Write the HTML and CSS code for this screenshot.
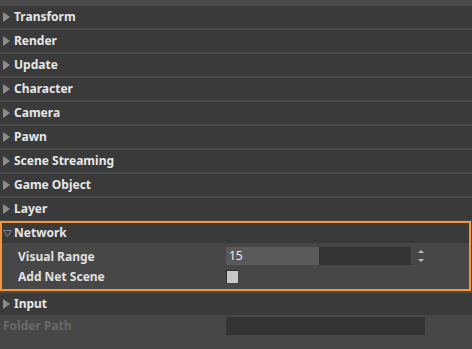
FILE: index.html
```html
<!DOCTYPE html>
<html>
<head>
<meta charset="utf-8">
<link rel="stylesheet" href="styles.css">
</head>
<body>
<div class="panel">
  <div class="row"><svg class="tri" width="7" height="10" viewBox="0 0 7 10"><path d="M0 0 L7 5 L0 10 Z" fill="#8c8c8c"/></svg><span class="title">Transform</span></div>
  <div class="row"><svg class="tri" width="7" height="10" viewBox="0 0 7 10"><path d="M0 0 L7 5 L0 10 Z" fill="#8c8c8c"/></svg><span class="title">Render</span></div>
  <div class="row"><svg class="tri" width="7" height="10" viewBox="0 0 7 10"><path d="M0 0 L7 5 L0 10 Z" fill="#8c8c8c"/></svg><span class="title">Update</span></div>
  <div class="row"><svg class="tri" width="7" height="10" viewBox="0 0 7 10"><path d="M0 0 L7 5 L0 10 Z" fill="#8c8c8c"/></svg><span class="title">Character</span></div>
  <div class="row"><svg class="tri" width="7" height="10" viewBox="0 0 7 10"><path d="M0 0 L7 5 L0 10 Z" fill="#8c8c8c"/></svg><span class="title">Camera</span></div>
  <div class="row"><svg class="tri" width="7" height="10" viewBox="0 0 7 10"><path d="M0 0 L7 5 L0 10 Z" fill="#8c8c8c"/></svg><span class="title">Pawn</span></div>
  <div class="row"><svg class="tri" width="7" height="10" viewBox="0 0 7 10"><path d="M0 0 L7 5 L0 10 Z" fill="#8c8c8c"/></svg><span class="title">Scene Streaming</span></div>
  <div class="row"><svg class="tri" width="7" height="10" viewBox="0 0 7 10"><path d="M0 0 L7 5 L0 10 Z" fill="#8c8c8c"/></svg><span class="title">Game Object</span></div>
  <div class="row"><svg class="tri" width="7" height="10" viewBox="0 0 7 10"><path d="M0 0 L7 5 L0 10 Z" fill="#8c8c8c"/></svg><span class="title">Layer</span></div>
  <div class="group">
    <div class="group-head">
      <svg class="tri-open" width="9" height="7" viewBox="0 0 9 7"><path d="M0.5 0.5 H8.5 L4.5 6.5 Z" fill="none" stroke="#8a8a8a" stroke-width="1"/></svg>
      <span class="title">Network</span>
    </div>
    <div class="group-body">
      <div class="prop">
        <span class="label">Visual Range</span>
        <div class="field">
          <div class="slider"><div class="fill" style="width:50%"></div><span class="val">15</span></div>
          <svg class="spin" width="8" height="14" viewBox="0 0 8 14"><path d="M4 1 L7 4 H1 Z" fill="#bdbdbd"/><path d="M1 10 H7 L4 13 Z" fill="#bdbdbd"/></svg>
        </div>
      </div>
      <div class="prop">
        <span class="label">Add Net Scene</span>
        <div class="field"><div class="check"></div></div>
      </div>
    </div>
  </div>
  <div class="row"><svg class="tri" width="7" height="10" viewBox="0 0 7 10"><path d="M0 0 L7 5 L0 10 Z" fill="#8c8c8c"/></svg><span class="title">Input</span></div>
  <div class="bottom">
    <span class="label dim">Folder Path</span>
    <div class="path"></div>
  </div>
</div>
</body>
</html>
```
FILE: styles.css
```css
html, body {
  margin: 0;
  padding: 0;
  background: #484848;
  width: 472px;
  height: 349px;
  overflow: hidden;
  font-family: "Noto Sans", "Open Sans", sans-serif;
}
.panel {
  display: flex;
  flex-direction: column;
  gap: 2px;
  padding-top: 6px;
  background: #4a4a4a;
  height: 349px;
  box-sizing: border-box;
}
.row {
  height: 22px;
  flex: none;
  background: #3a3a3a;
  display: flex;
  align-items: center;
  padding-left: 3px;
  gap: 4px;
}
.tri {
  display: block;
  flex: none;
}
.title {
  color: #e6e6e6;
  font-size: 12px;
  font-weight: bold;
  line-height: 22px;
}
.group {
  margin-top: -1px;
  margin-right: 1px;
  border: 2px solid #f7943a;
  display: flex;
  flex-direction: column;
  flex: none;
}
.group-head {
  height: 20px;
  background: #3a3a3a;
  display: flex;
  align-items: center;
  padding-left: 1px;
  gap: 2px;
}
.group-body {
  background: #474747;
  height: 46px;
  display: flex;
  flex-direction: column;
  padding-top: 3px;
  box-sizing: border-box;
}
.prop {
  height: 20px;
  display: flex;
  align-items: center;
  padding-left: 16px;
}
.label {
  color: #e0e0e0;
  font-size: 12px;
  font-weight: bold;
  width: 208px;
}
.field {
  display: flex;
  align-items: center;
  gap: 6px;
}
.slider {
  position: relative;
  width: 185px;
  height: 18px;
  background: #333333;
}
.fill {
  height: 18px;
  background: #5a5a5a;
}
.val {
  position: absolute;
  left: 3px;
  top: 0;
  line-height: 18px;
  font-size: 12px;
  color: #ececec;
}
.check {
  width: 11px;
  height: 12px;
  background: #c8c8c8;
  border-top: 1px solid #2e2e2e;
  border-left: 1px solid #2e2e2e;
}
.bottom {
  flex: 1;
  display: flex;
  align-items: flex-start;
  padding: 2px 0 0 3px;
  margin-top: -2px;
  background: #474747;
}
.dim {
  color: #6a6a6a;
  width: 223px;
  line-height: 18px;
}
.path {
  width: 199px;
  height: 18px;
  background: #343434;
}
```
